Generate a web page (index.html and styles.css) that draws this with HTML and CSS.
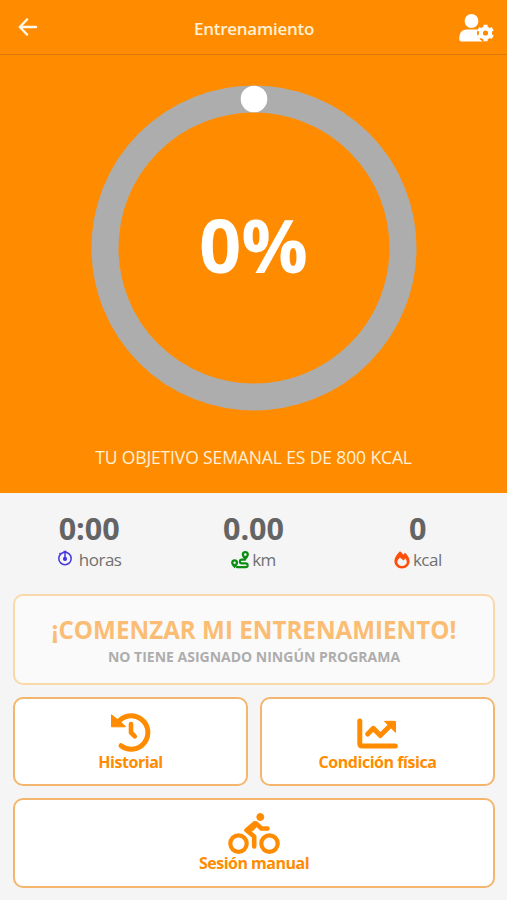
FILE: index.html
```html
<!DOCTYPE html>
<html lang="es">
<head>
    <meta charset="UTF-8">
    <meta name="viewport" content="width=device-width, initial-scale=1.0">
    <title>Entrenamiento</title>
    <link rel="stylesheet" href="styles.css">
</head>
<body>
    <!-- Header -->
    <header class="header">
        <svg class="back-icon" viewBox="0 0 20 18">
            <path d="M18 9H2M9 1.500L1.800 9L9 16.500"/>
        </svg>
        <h1 class="title">Entrenamiento</h1>
        <svg class="user-icon" viewBox="0 0 36 28">
            <circle cx="12.500" cy="7" r="6.900"/>
            <path d="M7.500 15.500h10c1.500 0 2.300.300 3 1v8l3 3H2.500C1 27.500.300 26.500.300 25c0-6 2.500-9.500 7.200-9.500z"/>
            <g class="gear">
                <circle class="gear-gap" cx="26.500" cy="19" r="8"/>
                <circle class="gear-ring" cx="26.500" cy="19" r="4.600"/>
                <path class="gear-teeth" d="M26.500 14v-3.300M26.500 24v3.300M22.200 16.500l-2.900-1.700M30.800 21.500l2.900 1.700M22.200 21.500l-2.900 1.700M30.800 16.500l2.900-1.700"/>
            </g>
        </svg>
    </header>

    <!-- Weekly goal -->
    <section class="goal">
        <div class="progress">
            <svg class="ring" viewBox="0 0 326 326">
                <circle class="ring-track" cx="163" cy="163" r="149"/>
                <circle class="ring-dot" cx="163" cy="14" r="13.300"/>
            </svg>
            <span class="percent">0%</span>
        </div>
        <p class="goal-text">TU OBJETIVO SEMANAL ES DE 800 KCAL</p>
    </section>

    <!-- Stats -->
    <section class="stats">
        <div class="stat">
            <div class="value">0:00</div>
            <div class="label hours">
                <svg class="time-icon" viewBox="0 0 16 16">
                    <circle cx="8" cy="8.500" r="6.200"/>
                    <path d="M8 2v7M6.500 1.500h3M2.500 3l1 1"/>
                    <circle class="time-center" cx="8" cy="8.900" r="1.300"/>
                </svg>
                <span>horas</span>
            </div>
        </div>
        <div class="stat">
            <div class="value">0.00</div>
            <div class="label distance">
                <svg class="route-icon" viewBox="0 0 18 18">
                    <path class="pin" fill-rule="evenodd" d="M14.300 0a3.600 3.600 0 0 1 3.600 3.600c0 2-2.300 4.600-3.600 5.900-1.300-1.300-3.600-3.900-3.600-5.900A3.600 3.600 0 0 1 14.300 0zm0 2.300a1.300 1.300 0 1 0 0 2.600 1.300 1.300 0 0 0 0-2.600z"/>
                    <path class="pin" fill-rule="evenodd" d="M3.600 8.300a3.500 3.500 0 0 1 3.500 3.500c0 1.900-2.200 4.200-3.500 5.500-1.300-1.300-3.500-3.600-3.500-5.500a3.500 3.500 0 0 1 3.500-3.500zm0 2.200a1.200 1.200 0 1 0 0 2.400 1.200 1.200 0 0 0 0-2.400z"/>
                    <path class="road" d="M14 8.700h-3.300a1.700 1.700 0 0 0 0 3.600h4a1.900 1.900 0 0 1 0 3.900H6"/>
                </svg>
                <span>km</span>
            </div>
        </div>
        <div class="stat">
            <div class="value">0</div>
            <div class="label calories">
                <svg class="fire-icon" viewBox="0 0 16 18">
                    <path fill-rule="evenodd" d="M6 .300c1.300 1 2.300 2.100 3.300 3.500.600-.800 1.100-1.400 1.800-2 2.600 2.300 4.500 5.600 4.500 8.200 0 4.300-3.300 7.500-7.600 7.500S.400 14.300.400 10C.400 7 3 3.100 6 .300zm-.100 6.200C4.400 8.200 3.300 9.500 3.300 11c0 2.300 2 4 4.700 4s4.800-1.700 4.800-4c0-1.100-.600-2.600-1.400-3.700L9.600 9.500z"/>
                </svg>
                <span>kcal</span>
            </div>
        </div>
    </section>

    <!-- Buttons -->
    <main class="actions">
        <button class="button start" disabled>
            <span class="start-title">¡COMENZAR MI ENTRENAMIENTO!</span>
            <span class="start-note">NO TIENE ASIGNADO NINGÚN PROGRAMA</span>
        </button>
        <button class="button">
            <svg class="icon" viewBox="0 0 42 42">
                <path class="stroke" d="M7.500 11.900A16.700 16.700 0 1 1 11 34.700"/>
                <path class="stroke hand" d="M21 13v8.500l3.800 3.800"/>
                <path class="solid" d="M1.500 3.800v12h14l-4.500-4.500z"/>
            </svg>
            <span>Historial</span>
        </button>
        <button class="button">
            <svg class="icon" viewBox="0 0 42 42">
                <path class="stroke" d="M2.800 10v22.500q0 2.500 2.500 2.500h33"/>
                <path class="stroke" d="M10.700 23l5.600-5.700 7 7.200L35 13"/>
                <path class="solid" d="M27.500 10.300h11v11z"/>
            </svg>
            <span>Condición física</span>
        </button>
        <button class="button manual">
            <svg class="icon bike" viewBox="0 0 52 42">
                <circle class="wheel" cx="10.500" cy="31.600" r="8.200"/>
                <circle class="wheel" cx="41.500" cy="31.600" r="8.200"/>
                <circle class="solid" cx="32.300" cy="5" r="3.500"/>
                <path class="rider" d="M26.500 11.500L18.500 18.200L26.200 24.500V34.500"/>
                <path class="rider" d="M28 11.500l5.500 5h6"/>
                <path class="solid" d="M26.500 9.500l4.500 2.500-6.500 7-5-1z"/>
            </svg>
            <span class="manual-text">Sesión manual</span>
        </button>
    </main>
</body>
</html>
```
FILE: styles.css
```css
* {
    box-sizing: border-box;
}

body {
    margin: 0;
    height: 900px;
    font-family: "Open Sans", "Noto Sans", sans-serif;
    background-color: #f5f5f5;
    overflow: hidden;
}

/* Header bar */
.header {
    display: flex;
    justify-content: space-between;
    align-items: center;
    height: 55px;
    padding: 0 12px 0 18px;
    background-color: #ff8c00;
    border-bottom: 1px solid #d97a0a;
}

.title {
    margin: 3px 0 0 9px;
    font-size: 17px;
    font-weight: 600;
    letter-spacing: -0.25px;
    color: #fff1d6;
}

.back-icon {
    width: 20px;
    height: 18px;
    margin-right: 2px;
    fill: none;
    stroke: #fff8e8;
    stroke-width: 2.5;
    stroke-linecap: round;
    stroke-linejoin: round;
}

.user-icon {
    width: 36px;
    height: 28px;
    margin-top: 2px;
    fill: #fff;
}

.gear-gap {
    fill: #ff8c00;
    stroke: #ff8c00;
    stroke-width: 1;
}

.gear-ring {
    fill: none;
    stroke: #fff;
    stroke-width: 4;
}

.gear-teeth {
    stroke: #fff;
    stroke-width: 4.2;
}

/* Weekly goal */
.goal {
    display: flex;
    flex-direction: column;
    align-items: center;
    height: 438px;
    padding-top: 30px;
    background-color: #ff8c00;
}

.progress {
    display: grid;
    place-items: center;
    width: 326px;
    height: 326px;
}

.ring,
.percent {
    grid-area: 1 / 1;
}

.ring {
    width: 326px;
    height: 326px;
}

.ring-track {
    fill: none;
    stroke: #adadad;
    stroke-width: 27;
}

.ring-dot {
    fill: #fff;
}

.percent {
    font-size: 74px;
    font-weight: 700;
    line-height: 1;
    color: #fff;
    padding-bottom: 7px;
}

.goal-text {
    margin: 34px 0 0;
    font-size: 17.5px;
    line-height: 24px;
    letter-spacing: -0.12px;
    color: #fff1d6;
    white-space: nowrap;
}

/* Stats */
.stats {
    display: grid;
    grid-template-columns: repeat(3, 1fr);
    height: 102px;
    padding: 17px 7px 0;
    text-align: center;
}

.value {
    font-size: 30.5px;
    font-weight: 700;
    line-height: 36px;
    color: #646464;
}

.label {
    display: flex;
    justify-content: center;
    align-items: center;
    gap: 3px;
    height: 27px;
    font-size: 17px;
    letter-spacing: -0.5px;
    color: #707070;
}

.hours {
    gap: 6px;
}

.time-icon {
    width: 16px;
    height: 16px;
    margin-bottom: 3px;
    fill: none;
    stroke: #4338e0;
    stroke-width: 1.5;
}

.time-center {
    fill: #4338e0;
}

.route-icon {
    width: 18px;
    height: 18px;
}

.pin {
    fill: #0a8f14;
}

.road {
    fill: none;
    stroke: #0a8f14;
    stroke-width: 2.2;
    stroke-linecap: round;
}

.fire-icon {
    width: 16px;
    height: 18px;
    fill: #ff4d0a;
}

/* Buttons */
.actions {
    display: grid;
    grid-template-columns: 1fr 1fr;
    grid-template-rows: 91px 89px 90px;
    gap: 12px;
    padding: 0 12px 0 13px;
    margin-top: -1px;
}

.button {
    display: flex;
    flex-direction: column;
    align-items: center;
    justify-content: flex-start;
    padding: 12px 0 0;
    font-family: inherit;
    font-size: 16px;
    font-weight: 700;
    line-height: 18px;
    letter-spacing: -0.45px;
    color: #ff8c00;
    background-color: #fff;
    border: 2px solid #f4b66c;
    border-radius: 10px;
}

.start,
.manual {
    grid-column: span 2;
}

.start {
    padding-top: 19px;
    background-color: #fafafa;
    border-color: #fad8a9;
    letter-spacing: 0;
}

.start-title {
    font-size: 24.2px;
    line-height: 30px;
    color: #fbbd74;
}

.start-note {
    margin-top: 3px;
    font-size: 14px;
    color: #adadad;
}

.icon {
    width: 42px;
    height: 42px;
    flex: none;
}

.bike {
    width: 52px;
}

.manual-text {
    letter-spacing: -0.5px;
}

.stroke {
    fill: none;
    stroke: #ff8c00;
    stroke-width: 5;
    stroke-linecap: round;
    stroke-linejoin: round;
}

.hand {
    stroke-width: 4.6;
}

.solid {
    fill: #ff8c00;
    stroke: #ff8c00;
    stroke-linejoin: round;
}

.wheel {
    fill: none;
    stroke: #ff8c00;
    stroke-width: 4.2;
}

.rider {
    fill: none;
    stroke: #ff8c00;
    stroke-width: 4.6;
    stroke-linecap: round;
    stroke-linejoin: round;
}
```
